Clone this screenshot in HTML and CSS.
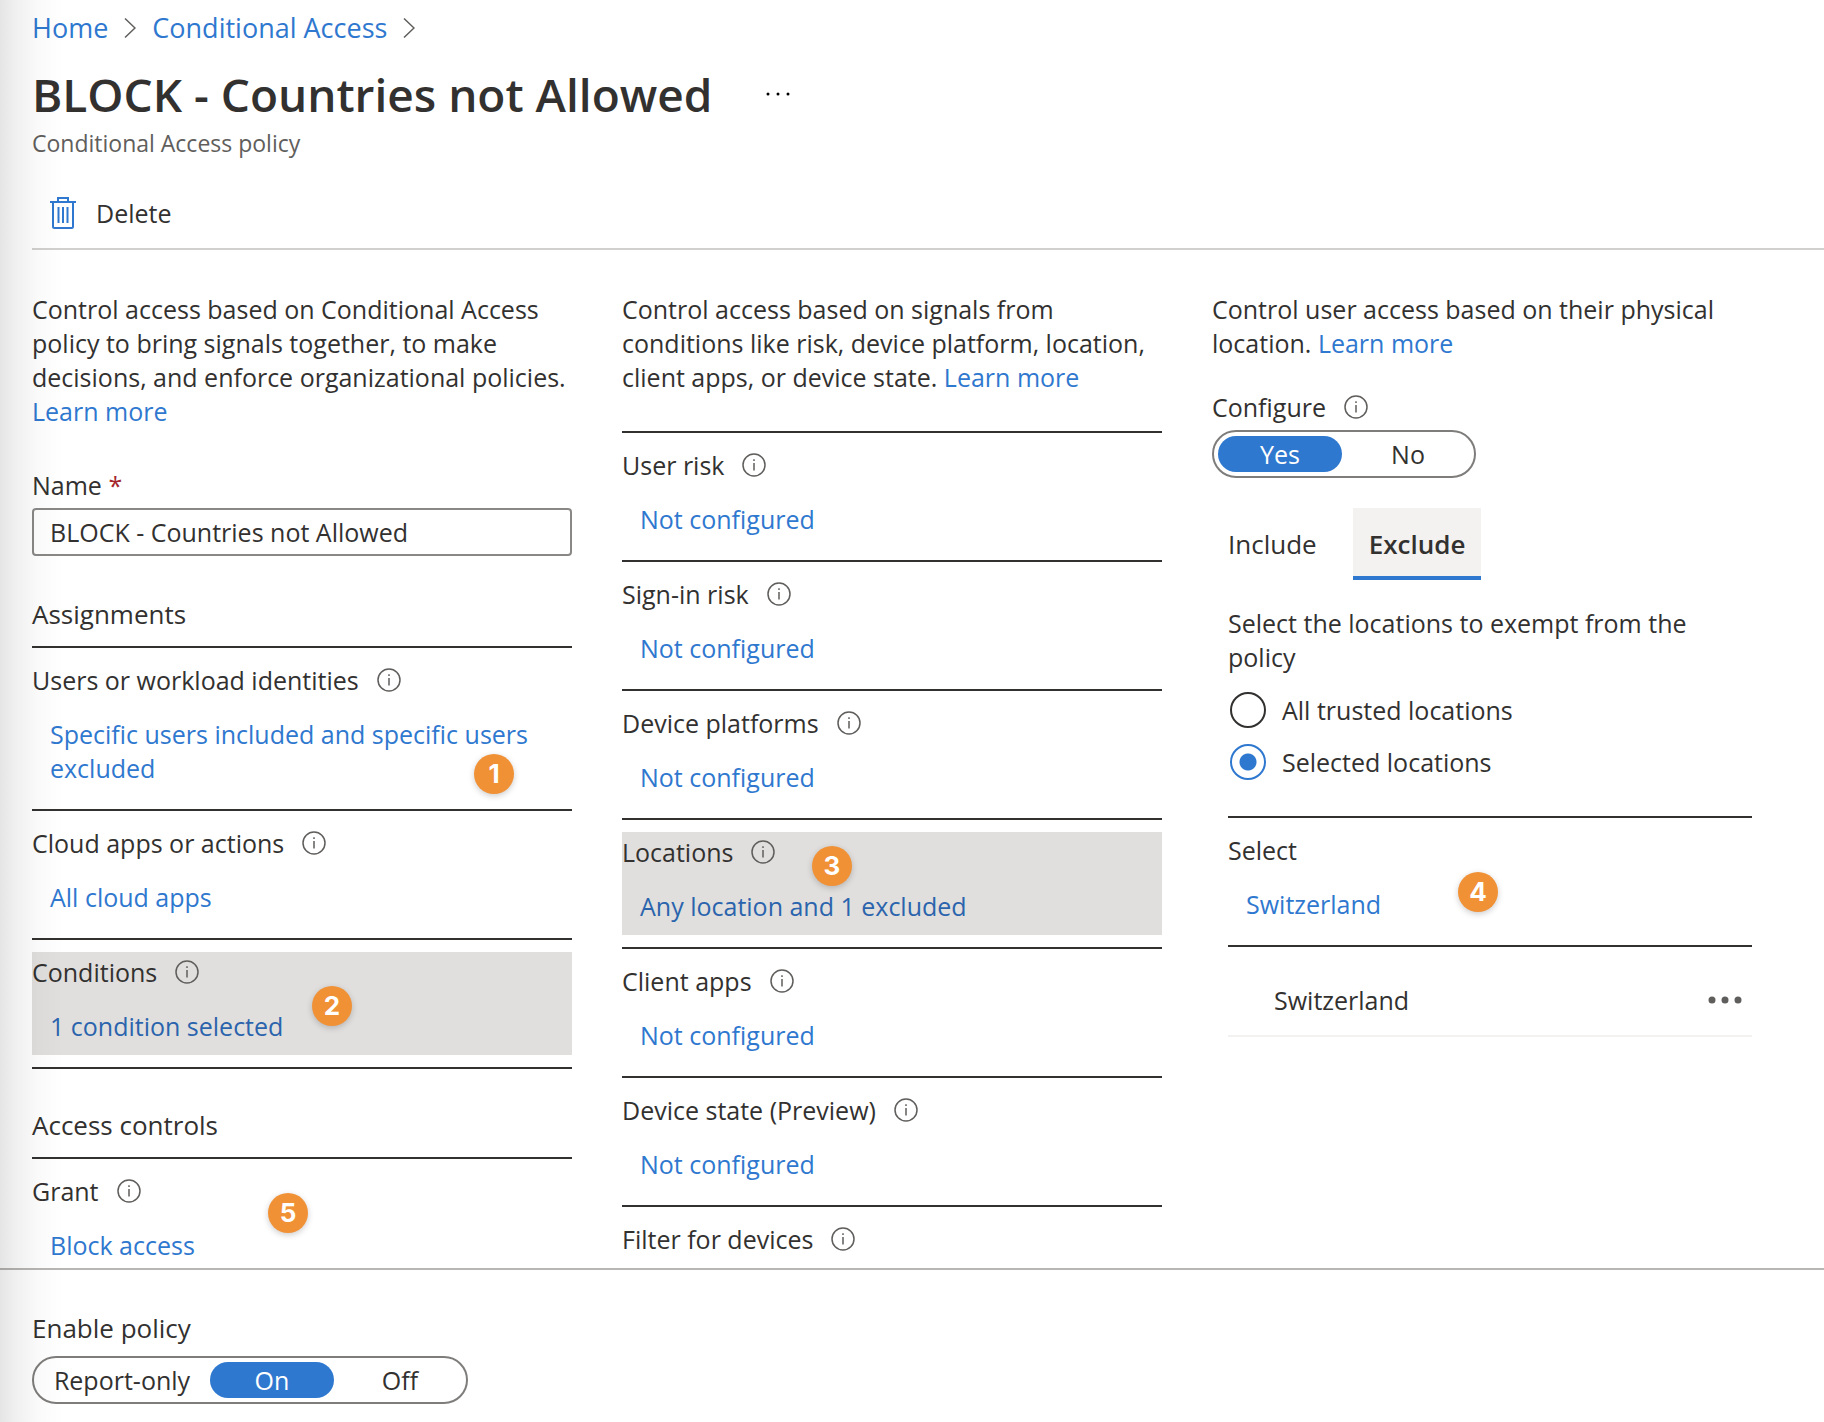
FILE: index.html
```html
<!DOCTYPE html>
<html lang="en">
<head>
<meta charset="utf-8">
<meta name="viewport" content="width=device-width, initial-scale=1">
<title>BLOCK - Countries not Allowed</title>
<link rel="stylesheet" href="styles.css">
</head>
<body>
<svg class="sprite" aria-hidden="true">
  <symbol id="info" viewBox="0 0 24 24">
    <circle cx="12" cy="12" r="11" fill="none" stroke="currentColor" stroke-width="1.5"/>
    <path d="M12 10v7.500M12 6.300v1.700" fill="none" stroke="currentColor" stroke-width="1.500"/>
  </symbol>
  <symbol id="chevron" viewBox="0 0 12 22">
    <path d="M1 1.500l10 9.500L1 20.500" fill="none" stroke="currentColor" stroke-width="1.500"/>
  </symbol>
</svg>

<div class="scroll">
  <header class="header">
    <nav class="breadcrumb">
      <a href="#">Home</a>
      <svg class="chevron"><use href="#chevron"/></svg>
      <a href="#">Conditional Access</a>
      <svg class="chevron"><use href="#chevron"/></svg>
    </nav>
    <div class="title-row">
      <h1>BLOCK - Countries not Allowed</h1>
      <button class="icon-button" type="button">
        <svg width="24" height="4" viewBox="0 0 24 4"><circle cx="2" cy="2" r="1.500"/><circle cx="12" cy="2" r="1.500"/><circle cx="22" cy="2" r="1.500"/></svg>
      </button>
    </div>
    <p class="subtitle">Conditional Access policy</p>
    <div class="toolbar">
      <button class="command" type="button">
        <svg class="trash" width="26" height="32" viewBox="0 0 26 32" fill="none" stroke="currentColor" stroke-width="2">
          <path d="M0 5h26M8 5V1h10v4M3 5v24.500q0 1.500 1.500 1.500h17q1.500 0 1.500-1.500V5M8.500 10v16M13 10v16M17.500 10v16"/>
        </svg>
        Delete
      </button>
    </div>
  </header>

  <main class="columns">
    <section class="column">
      <p>Control access based on Conditional Access policy to bring signals together, to make decisions, and enforce organizational policies. <a href="#">Learn more</a></p>
      <div class="field">
        <label for="name">Name <span class="required">*</span></label>
        <input id="name" class="text-input" type="text" value="BLOCK - Countries not Allowed">
      </div>
      <h2>Assignments</h2>
      <ul class="list closed">
        <li class="item">
          <div class="item-body">
            <span class="label">Users or workload identities <svg class="info"><use href="#info"/></svg></span>
            <a href="#">Specific users included and specific users excluded</a>
          </div>
          <span class="badge badge-users">1</span>
        </li>
        <li class="item">
          <div class="item-body">
            <span class="label">Cloud apps or actions <svg class="info"><use href="#info"/></svg></span>
            <a href="#">All cloud apps</a>
          </div>
        </li>
        <li class="item">
          <div class="item-body selected">
            <span class="label">Conditions <svg class="info"><use href="#info"/></svg></span>
            <a href="#">1 condition selected</a>
          </div>
          <span class="badge badge-conditions">2</span>
        </li>
      </ul>
      <h2>Access controls</h2>
      <ul class="list">
        <li class="item">
          <div class="item-body">
            <span class="label">Grant <svg class="info"><use href="#info"/></svg></span>
            <a href="#">Block access</a>
          </div>
          <span class="badge badge-grant">5</span>
        </li>
      </ul>
    </section>

    <section class="column">
      <p>Control access based on signals from conditions like risk, device platform, location, client apps, or device state. <a href="#">Learn more</a></p>
      <ul class="list conditions">
        <li class="item">
          <div class="item-body">
            <span class="label">User risk <svg class="info"><use href="#info"/></svg></span>
            <a href="#">Not configured</a>
          </div>
        </li>
        <li class="item">
          <div class="item-body">
            <span class="label">Sign-in risk <svg class="info"><use href="#info"/></svg></span>
            <a href="#">Not configured</a>
          </div>
        </li>
        <li class="item">
          <div class="item-body">
            <span class="label">Device platforms <svg class="info"><use href="#info"/></svg></span>
            <a href="#">Not configured</a>
          </div>
        </li>
        <li class="item">
          <div class="item-body selected">
            <span class="label">Locations <svg class="info"><use href="#info"/></svg></span>
            <a href="#">Any location and 1 excluded</a>
          </div>
          <span class="badge badge-locations">3</span>
        </li>
        <li class="item">
          <div class="item-body">
            <span class="label">Client apps <svg class="info"><use href="#info"/></svg></span>
            <a href="#">Not configured</a>
          </div>
        </li>
        <li class="item">
          <div class="item-body">
            <span class="label">Device state (Preview) <svg class="info"><use href="#info"/></svg></span>
            <a href="#">Not configured</a>
          </div>
        </li>
        <li class="item">
          <div class="item-body">
            <span class="label">Filter for devices <svg class="info"><use href="#info"/></svg></span>
          </div>
        </li>
      </ul>
    </section>

    <section class="column">
      <p>Control user access based on their physical location. <a href="#">Learn more</a></p>
      <fieldset class="choice configure">
        <legend class="label">Configure <svg class="info"><use href="#info"/></svg></legend>
        <div class="toggle">
          <label><input type="radio" name="configure" checked><span>Yes</span></label>
          <label><input type="radio" name="configure"><span>No</span></label>
        </div>
      </fieldset>
      <div class="tabs" role="tablist">
        <button type="button" role="tab" aria-selected="false">Include</button>
        <button type="button" role="tab" aria-selected="true">Exclude</button>
      </div>
      <div class="panel" role="tabpanel">
        <p id="exempt">Select the locations to exempt from the policy</p>
        <div class="radios" role="radiogroup" aria-labelledby="exempt">
          <label class="radio"><input type="radio" name="locations">All trusted locations</label>
          <label class="radio"><input type="radio" name="locations" checked>Selected locations</label>
        </div>
        <ul class="list closed">
          <li class="item">
            <div class="item-body">
              <span class="label">Select</span>
              <a href="#">Switzerland</a>
            </div>
            <span class="badge badge-select">4</span>
          </li>
        </ul>
        <div class="location">
          <span>Switzerland</span>
          <button class="icon-button" type="button">
            <svg width="34" height="8" viewBox="0 0 34 8" fill="#605e5c"><circle cx="4" cy="4" r="3.500"/><circle cx="17" cy="4" r="3.500"/><circle cx="30" cy="4" r="3.500"/></svg>
          </button>
        </div>
      </div>
    </section>
  </main>
</div>

<footer class="footer">
  <fieldset class="choice">
    <legend class="footer-title">Enable policy</legend>
    <div class="toggle">
      <label class="wide"><input type="radio" name="enable"><span>Report-only</span></label>
      <label><input type="radio" name="enable" checked><span>On</span></label>
      <label><input type="radio" name="enable"><span>Off</span></label>
    </div>
  </fieldset>
</footer>
</body>
</html>
```
FILE: styles.css
```css
:root {
  --text: #323130;
  --muted: #605e5c;
  --link: #2f78cf;
  --line: #323130;
}

* { box-sizing: border-box; }

body {
  position: relative;
  display: flex;
  flex-direction: column;
  height: 100vh;
  margin: 0;
  background: #fff;
  color: var(--text);
  font: 25px/34px "Open Sans", "Noto Sans", sans-serif;
}

/* shadow cast by the neighbouring blade */
body::after {
  content: "";
  position: absolute;
  inset: 0 auto 0 0;
  width: 64px;
  background: linear-gradient(to right, rgba(0, 0, 0, .1), rgba(0, 0, 0, .06) 25%, rgba(0, 0, 0, .02) 60%, transparent);
  pointer-events: none;
}

h1, h2, p, ul, fieldset { margin: 0; padding: 0; }
ul { list-style: none; }
fieldset { border: 0; min-width: 0; }
legend { padding: 0; }
svg { display: block; flex: none; }
a { color: var(--link); text-decoration: none; }
button, input { color: inherit; font: inherit; }
button { padding: 0; border: 0; background: none; cursor: pointer; }

.sprite { position: absolute; width: 0; height: 0; }
.info { width: 24px; height: 24px; color: var(--muted); }
.chevron { width: 12px; height: 22px; color: var(--muted); }

.scroll {
  flex: 1;
  min-height: 0;
  overflow-y: auto;
  scrollbar-width: none;
}

.header { padding: 10px 0 0 32px; }

.breadcrumb {
  display: flex;
  align-items: center;
  gap: 16px;
  font-size: 27px;
  line-height: 36px;
}

.title-row {
  display: flex;
  align-items: center;
  gap: 54px;
  margin-top: 20px;
}

h1 { font-size: 46px; font-weight: 600; line-height: 56px; }

.subtitle { margin-top: 6px; color: var(--muted); font-size: 23px; line-height: 30px; }

.toolbar {
  margin-top: 38px;
  padding: 0 18px 18px;
  border-bottom: 2px solid #d2d0ce;
}

.command { display: flex; align-items: center; gap: 20px; line-height: 34px; }
.trash { color: var(--link); }

.columns {
  display: grid;
  grid-template-columns: repeat(3, minmax(0, 1fr));
  gap: 50px;
  padding: 42px 72px 0 32px;
}

.field { display: flex; flex-direction: column; gap: 6px; margin-top: 40px; }
.required { color: #a4262c; }

.text-input {
  width: 100%;
  height: 48px;
  padding: 0 16px;
  border: 2px solid #8a8886;
  border-radius: 4px;
  background: #fff;
}

h2 {
  margin: 40px 0 14px;
  font-size: 26px;
  font-weight: 400;
  line-height: 36px;
}

.list.closed { border-bottom: 2px solid var(--line); }
.list.closed + h2 { margin-top: 38px; }
.list.conditions { margin-top: 37px; }

.item {
  position: relative;
  padding: 12px 0;
  border-top: 2px solid var(--line);
}

.item-body {
  display: flex;
  flex-direction: column;
  align-items: flex-start;
  gap: 20px;
  padding: 3px 0 12px;
}
.item-body a { margin: 0 18px; }
.selected { background: #e1dfdd; }
.selected a { color: #2b64ad; }

.label { display: flex; align-items: center; gap: 18px; }

.badge {
  position: absolute;
  width: 40px;
  height: 40px;
  border-radius: 50%;
  background: #f19135;
  box-shadow: 0 2px 6px rgba(0, 0, 0, .2);
  color: #fff;
  font: 700 26px/40px Inter, sans-serif;
  text-align: center;
}
.badge-users { left: 442px; top: 106px; }
.badge-conditions { left: 280px; top: 46px; }
.badge-locations { left: 190px; top: 26px; }
.badge-select { left: 230px; top: 54px; }
.badge-grant { left: 236px; top: 34px; }

.configure { margin-top: 30px; }
.choice .toggle { margin-top: 6px; }

.toggle {
  display: inline-flex;
  gap: 4px;
  height: 48px;
  padding: 4px;
  border: 2px solid #7f7d7b;
  border-radius: 24px;
  background: #fff;
  vertical-align: top;
}
.toggle label { position: relative; display: flex; min-width: 124px; }
.toggle .wide { min-width: 168px; }
.toggle input { position: absolute; inset: 0; margin: 0; opacity: 0; }
.toggle span { flex: 1; border-radius: 18px; line-height: 36px; text-align: center; }
.toggle input:checked + span { background: var(--link); color: #fff; }

.tabs { display: flex; gap: 20px; margin-top: 30px; }
.tabs button {
  height: 72px;
  padding: 4px 16px 0;
  border-bottom: 4px solid transparent;
  font-size: 26px;
}
.tabs [aria-selected="true"] {
  border-color: var(--link);
  background: #f3f2f1;
  font-weight: 600;
}

.panel { margin-top: 26px; padding-left: 16px; }

.radios { display: grid; gap: 16px; margin: 18px 0 36px; }
.radio { display: flex; align-items: center; gap: 16px; height: 36px; }
.radio input {
  appearance: none;
  width: 36px;
  height: 36px;
  margin: 0 0 0 2px;
  border: 2px solid var(--line);
  border-radius: 50%;
}
.radio input:checked {
  border-color: var(--link);
  background: radial-gradient(circle, var(--link) 8px, transparent 9px);
}

.location {
  display: flex;
  align-items: center;
  justify-content: space-between;
  padding: 36px 10px 18px 46px;
  border-bottom: 2px solid #f3f2f1;
}

.footer { padding: 40px 32px 18px; border-top: 2px solid #b8b6b4; }
.footer-title { font-size: 26px; line-height: 36px; }
.footer .toggle { margin-top: 10px; }
```
